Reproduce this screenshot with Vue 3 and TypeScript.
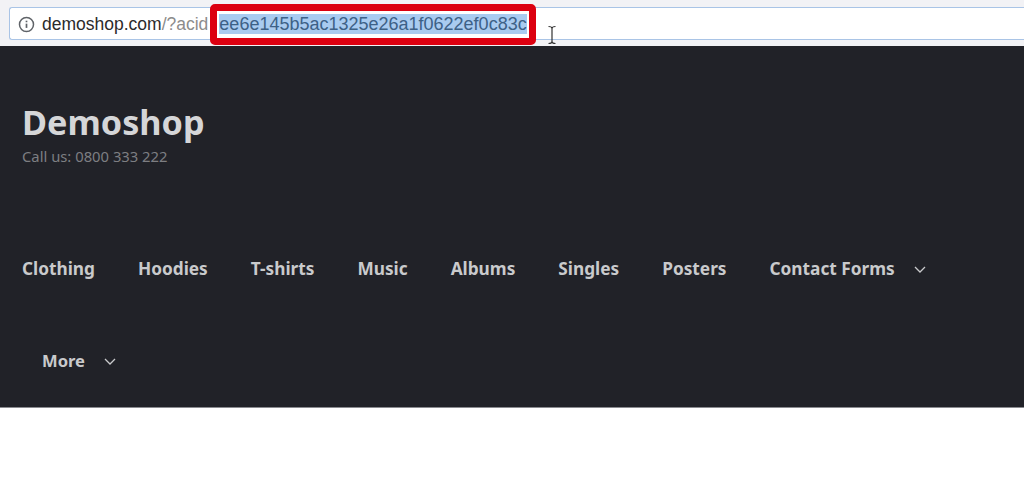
<script setup lang="ts">
const links: string[] = ['Clothing', 'Hoodies', 'T-shirts', 'Music', 'Albums', 'Singles', 'Posters']
</script>

<template>
  <div class="page">
    <div class="browser">
      <div class="address">
        <svg class="info" width="17" height="17" viewBox="0 0 16 16" fill="none" stroke="#5f6368" stroke-width="1.4">
          <circle cx="8" cy="8" r="6.6" />
          <path d="M8 7.2v4" stroke-width="1.6" />
          <path d="M8 4.4v1.5" stroke-width="1.6" />
        </svg>
        <span class="host">demoshop.com</span><span class="query">/?acid</span>
        <span class="token"><span class="selected">ee6e145b5ac1325e26a1f0622ef0c83c</span></span>
        <svg class="ibeam" width="10" height="20" viewBox="0 0 10 20" fill="none" stroke="#333" stroke-width="1.2">
          <path d="M1.5 1.5c2 0 3.5.5 3.5 2v13c0 1.500-1.500 2-3.500 2M8.500 1.500c-2 0-3.500.5-3.500 2v13c0 1.500 1.500 2 3.500 2" />
        </svg>
      </div>
    </div>
    <header class="masthead">
      <div class="brand">
        <div class="title">Demoshop</div>
        <div class="tagline">Call us: 0800 333 222</div>
      </div>
      <nav class="nav">
        <a v-for="link in links" :key="link" class="item">{{ link }}</a>
        <a class="item">Contact Forms
          <svg class="chev" width="12" height="7" viewBox="0 0 12 7" fill="none" stroke="#c9cacc" stroke-width="1.3"><path d="M1 1l5 5 5-5" /></svg>
        </a>
        <a class="item more">More
          <svg class="chev" width="12" height="7" viewBox="0 0 12 7" fill="none" stroke="#c9cacc" stroke-width="1.3"><path d="M1 1l5 5 5-5" /></svg>
        </a>
      </nav>
    </header>
  </div>
</template>

<style scoped>
.page {
  width: 1024px;
  height: 493px;
  overflow: hidden;
  background: #fff;
  font-family: "Noto Sans", sans-serif;
}
.browser {
  height: 46px;
  box-sizing: border-box;
  padding: 7px 0 6px 9px;
  background: #f2f2f5;
}
.address {
  position: relative;
  display: flex;
  align-items: center;
  height: 33px;
  box-sizing: border-box;
  padding-left: 8px;
  padding-top: 1px;
  background: #fff;
  border: 1px solid #a9c4e6;
  border-right: 0;
  border-radius: 3px 0 0 3px;
  font-family: "Liberation Sans", Arial, sans-serif;
  font-size: 17.5px;
}
.info {
  margin-right: 7px;
}
.host {
  color: #2b2b2b;
}
.query {
  color: #8c8c8c;
}
.token {
  position: relative;
  margin-left: 11px;
  font-size: 18px;
}
.selected {
  background: #a9cbf0;
  color: #3d6187;
}
.token::after {
  content: "";
  position: absolute;
  inset: -10px -9px -10px -9px;
  border: 7px solid #dc0010;
  border-radius: 5px;
}
.ibeam {
  position: absolute;
  left: 537px;
  top: 17px;
}
.masthead {
  height: 362px;
  box-sizing: border-box;
  padding: 55px 22px 0;
  background: #212228;
  border-bottom: 1px solid #8a8b90;
}
.title {
  color: #d5d6d8;
  font-size: 34.200px;
  font-weight: 700;
  line-height: 42px;
}
.tagline {
  margin-top: 3px;
  color: #7d7e82;
  font-size: 14.800px;
  line-height: 20px;
}
.nav {
  display: flex;
  flex-wrap: wrap;
  column-gap: 43px;
  row-gap: 68px;
  margin-top: 91px;
}
.item {
  display: flex;
  align-items: center;
  height: 24px;
  color: #c9cacc;
  font-size: 17.250px;
  font-weight: 700;
  line-height: 24px;
  white-space: nowrap;
}
.chev {
  margin-left: 19px;
}
.more {
  margin-left: 20px;
  font-size: 16.600px;
}
</style>
